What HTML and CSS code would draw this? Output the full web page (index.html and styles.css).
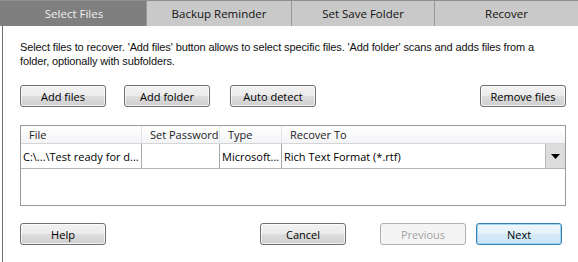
FILE: index.html
```html
<!DOCTYPE html>
<html>
<head>
<meta charset="utf-8">
<link rel="stylesheet" href="styles.css">
</head>
<body>
<div class="window">
  <div class="tabs">
    <div class="tab active">Select Files</div>
    <div class="tab">Backup Reminder</div>
    <div class="tab">Set Save Folder</div>
    <div class="tab">Recover</div>
  </div>
  <div class="panel">
    <p class="desc">Select files to recover. 'Add files' button allows to select specific files. 'Add folder' scans and adds files from a<br>folder, optionally with subfolders.</p>
    <div class="toolbar">
      <button class="btn">Add files</button>
      <button class="btn">Add folder</button>
      <button class="btn btn-auto">Auto detect</button>
      <span class="spacer"></span>
      <button class="btn">Remove files</button>
    </div>
    <div class="list">
      <div class="row head">
        <div class="cell">File</div>
        <div class="cell">Set Password</div>
        <div class="cell">Type</div>
        <div class="cell last">Recover To</div>
      </div>
      <div class="row item">
        <div class="cell">C:\...\Test ready for d...</div>
        <div class="cell"></div>
        <div class="cell">Microsoft...</div>
        <div class="cell last combo">
          <span class="combo-text">Rich Text Format (*.rtf)</span>
          <span class="combo-arrow"><svg width="9" height="5" viewBox="0 0 9 5"><path d="M0 0H9L4.5 5Z" fill="#000"/></svg></span>
        </div>
      </div>
    </div>
    <div class="footer">
      <button class="btn">Help</button>
      <span class="spacer"></span>
      <button class="btn">Cancel</button>
      <button class="btn btn-prev" disabled>Previous</button>
      <button class="btn btn-next">Next</button>
    </div>
  </div>
</div>
</body>
</html>
```
FILE: styles.css
```css
* { box-sizing: border-box; }
html, body { margin: 0; padding: 0; background: #fff; }
body {
  font-family: "Open Sans", "Liberation Sans", sans-serif;
  font-size: 11px;
  color: #000;
  width: 578px;
  height: 262px;
  overflow: hidden;
}
.window { width: 578px; height: 262px; display: flex; flex-direction: column; }
.tabs {
  display: grid;
  grid-template-columns: 146px 145px 143px 1fr;
  height: 26px;
  border-top: 1px solid #8e8e8e;
  background: #c8c8c8;
}
.tab {
  display: flex;
  align-items: center;
  justify-content: center;
  background: #c9c9c9;
  color: #111;
  border-left: 1px solid #969696;
  font-size: 11.5px;
}
.tab.active {
  background: #7f7f7f;
  color: #f0f0f0;
  border-left: none;
  padding-left: 2px;
}
.panel {
  flex: 1;
  margin-left: 2px;
  border-left: 1px solid #6f6f6f;
  padding: 14px 12px 0 17px;
  display: flex;
  flex-direction: column;
}
.desc {
  margin: 0;
  font-family: "Liberation Sans", "Open Sans", sans-serif;
  font-size: 11px;
  line-height: 14px;
  height: 28px;
  white-space: nowrap;
  letter-spacing: -0.12px;
  color: #111;
}
.toolbar {
  display: flex;
  gap: 18px;
  margin-top: 17px;
}
.spacer { flex: 1; }
.btn {
  width: 86px;
  height: 22px;
  padding: 0;
  font-family: inherit;
  font-size: 11px;
  color: #000;
  border: 1px solid #707070;
  border-radius: 3px;
  background: linear-gradient(#f2f2f2 0%, #ebebeb 50%, #dddddd 51%, #cfcfcf 100%);
  box-shadow: inset 0 0 0 1px rgba(255,255,255,0.7);
}
.btn-auto { margin-left: 2px; }
.list {
  margin-top: 18px;
  height: 81px;
  border: 1px solid #9a9a9a;
  background: #fff;
}
.row {
  display: grid;
  grid-template-columns: 121px 78px 62px 1fr;
}
.row.head {
  height: 18px;
  background: linear-gradient(#ffffff, #f3f4f6);
  border-bottom: 1px solid #d5d5d5;
  color: #222;
}
.row.head .cell {
  border-right: 1px solid #e3e4e6;
  padding-left: 8px;
  display: flex;
  align-items: center;
}
.row.item {
  height: 25px;
  border-bottom: 1px solid #b4b4b4;
}
.row.item .cell {
  border-right: 1px solid #a8a8a8;
  padding-left: 2px;
  display: flex;
  align-items: center;
  white-space: nowrap;
  overflow: hidden;
}
.cell.last { border-right: none !important; }
.row.item .combo {
  padding: 0;
  display: flex;
  align-items: stretch;
}
.combo-text {
  flex: 1;
  display: flex;
  align-items: center;
  padding-left: 2px;
}
.combo-arrow {
  width: 20px;
  display: flex;
  align-items: center;
  justify-content: center;
  background: #dcdcdc;
  border-left: 1px solid #b8b8b8;
}
.footer {
  display: flex;
  margin-top: 17px;
  padding-right: 4px;
}
.btn-prev {
  margin-left: 34px;
  color: #a3a3a3;
  border-color: #adb2b5;
  background: #f4f4f4;
  box-shadow: none;
}
.btn-next {
  margin-left: 10px;
  border-color: #3c7fb1;
  background: linear-gradient(#eef7fc, #e3f1fa 50%, #d4eaf8 51%, #cbe4f6);
  box-shadow: inset 0 0 0 1px #9fd4f3;
}
```
